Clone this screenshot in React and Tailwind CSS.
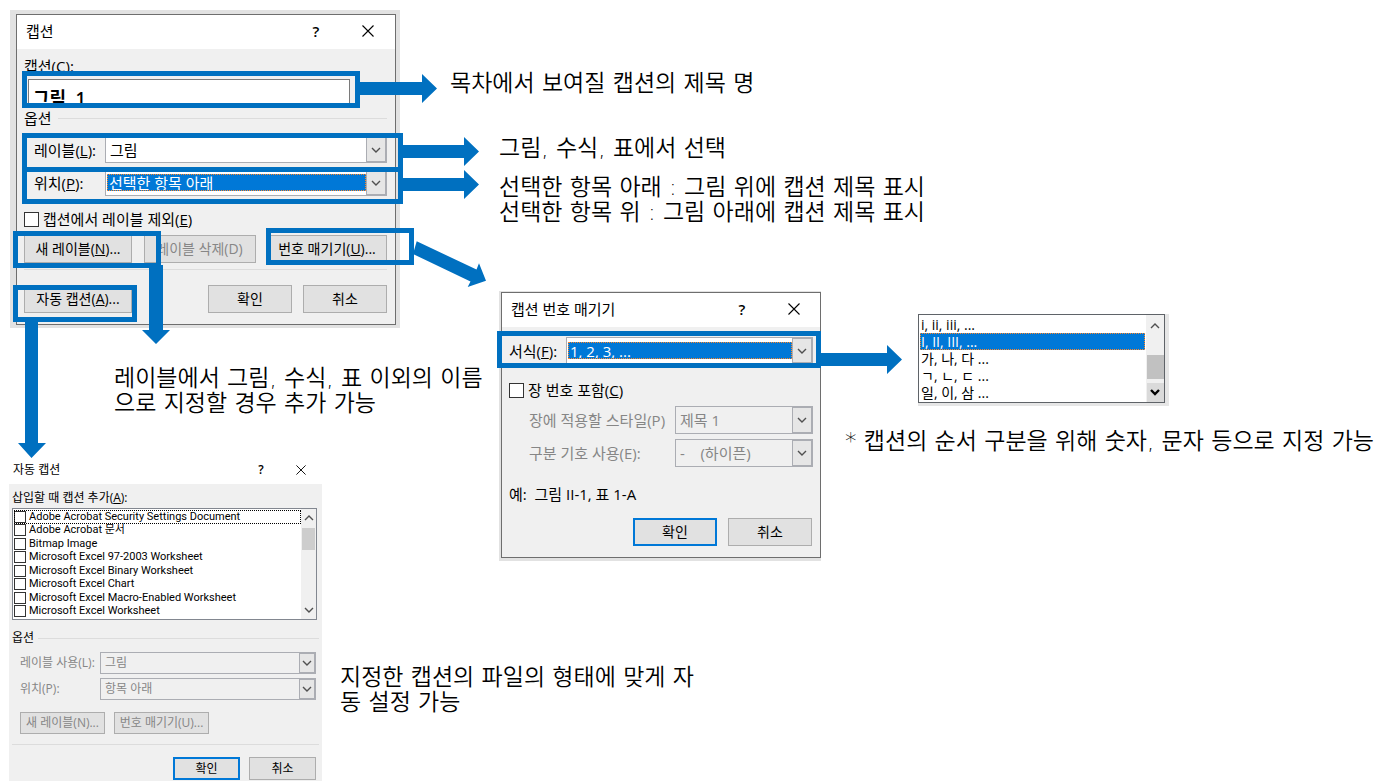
import React from 'react';
import clsx from 'clsx';

const documentTypes = [
  'Adobe Acrobat Security Settings Document',
  'Adobe Acrobat 문서',
  'Bitmap Image',
  'Microsoft Excel 97-2003 Worksheet',
  'Microsoft Excel Binary Worksheet',
  'Microsoft Excel Chart',
  'Microsoft Excel Macro-Enabled Worksheet',
  'Microsoft Excel Worksheet',
];

const numberFormats = ['i, ii, iii, ...', 'I, II, III, ...', '가, 나, 다 ...', 'ㄱ, ㄴ, ㄷ ...', '일, 이, 삼 ...'];

const Chevron = ({ up, className }) => (
  <svg viewBox="0 0 10 6" className={clsx('h-[6px] w-[10px]', className)} fill="none" stroke="currentColor">
    <path d={up ? 'M1 5 L5 1 L9 5' : 'M1 1 L5 5 L9 1'} strokeWidth="1.4" />
  </svg>
);

const TitleBar = ({ title, small, className }) => (
  <header className={clsx('flex items-center bg-white', className)}>
    <h2 className="flex-1">{title}</h2>
    <button type="button" aria-label="도움말" className="w-4 font-semibold">?</button>
    <button type="button" aria-label="닫기" className={clsx('flex w-4 justify-center', small ? 'ml-6' : 'ml-9')}>
      <svg viewBox="0 0 12 12" className={small ? 'h-[10px] w-[10px]' : 'h-3 w-3'} stroke="currentColor" strokeWidth="1.1">
        <path d="M0.5 0.5 L11.5 11.5 M11.5 0.5 L0.5 11.5" />
      </svg>
    </button>
  </header>
);

const Button = ({ primary, className, children, ...props }) => (
  <button
    type="button"
    className={clsx(
      'bg-[#e1e1e1] whitespace-nowrap disabled:text-[#868686]',
      primary ? 'border-2 border-[#0078d7]' : 'border border-[#adadad]',
      className
    )}
    {...props}
  >
    {children}
  </button>
);

const Combo = ({ id, value, focused, disabled, small, className }) => (
  <div
    className={clsx(
      'flex border border-[#abadb3] p-px',
      disabled ? 'bg-[#f0f0f0] text-[#868686]' : 'bg-white',
      className
    )}
  >
    <select
      id={id}
      disabled={disabled}
      defaultValue={value}
      className={clsx(
        'min-w-0 flex-1 appearance-none py-0 disabled:opacity-100',
        focused ? 'my-[3px] border border-dotted border-[#ff8728] bg-[#0078d7] px-px leading-4 text-white' : 'px-[3px]'
      )}
    >
      <option>{value}</option>
    </select>
    <span
      className={clsx(
        '-my-px -mr-px flex items-center justify-center border border-[#abadb3] bg-[#e6e6e6] text-[#505050]',
        small ? 'w-4' : 'w-5'
      )}
    >
      <Chevron />
    </span>
  </div>
);

const CheckBox = ({ id, className }) => (
  <input
    id={id}
    type="checkbox"
    className={clsx('shrink-0 appearance-none border border-[#333] bg-white checked:bg-[#0078d7]', className)}
  />
);

const Note = ({ className, children }) => (
  <p className={clsx('absolute font-["DejaVu_Sans","Noto_Sans_CJK_KR",sans-serif] text-[23px] leading-[25px] font-[350] whitespace-nowrap', className)}>
    {children}
  </p>
);

const CaptionDialog = () => (
  <section className="absolute top-[10px] left-[10px] w-[390px] bg-[#e2e2e2] pt-1 pr-1 pb-[3px] pl-[6px] text-[15px] leading-5">
    <div className="border border-[#6e6e6e] bg-[#f0f0f0]">
      <TitleBar title="캡션" className="h-[34px] pr-[19px] pb-[2px] pl-[9px]" />
      <div className="pt-[7px] pr-2 pb-[11px] pl-[7px]">
        <label htmlFor="caption">캡션(<u>C</u>):</label>
        <div className="ml-1 mt-[3px] h-[27px] w-[322px] overflow-hidden">
          <input
            id="caption"
            defaultValue="그림  1"
            className="h-9 w-full border border-[#7a7a7a] bg-white px-1 text-[18px] font-semibold"
          />
        </div>
        <div className="flex items-center gap-[6px] pt-[2px]">
          <span>옵션</span>
          <hr className="flex-1 border-[#dcdcdc]" />
        </div>
        <div className="mt-2 flex items-center">
          <label htmlFor="label" className="w-[81px] pl-[10px]">레이블(<u>L</u>):</label>
          <Combo id="label" value="그림" className="h-[27px] flex-1" />
        </div>
        <div className="mt-[6px] flex items-center">
          <label htmlFor="position" className="w-[81px] pl-[10px]">위치(<u>P</u>):</label>
          <Combo id="position" value="선택한 항목 아래" focused className="h-[27px] flex-1" />
        </div>
        <div className="mt-[13px] flex items-center gap-1">
          <CheckBox id="exclude" className="h-[15px] w-[15px]" />
          <label htmlFor="exclude">캡션에서 레이블 제외(<u>E</u>)</label>
        </div>
        <div className="mt-[6px] flex justify-between text-[14px]">
          <Button className="h-7 w-[108px]">새 레이블(<u>N</u>)...</Button>
          <Button className="h-7 w-[112px]" disabled>레이블 삭제(D)</Button>
          <Button className="h-7 w-[120px]">번호 매기기(<u>U</u>)...</Button>
        </div>
        <hr className="mt-[6px] border-[#dcdcdc]" />
        <div className="mt-[15px] flex gap-[11px] text-[14px]">
          <Button className="h-7 w-[108px]">자동 캡션(<u>A</u>)...</Button>
          <Button className="ml-auto h-7 w-[84px]">확인</Button>
          <Button className="h-7 w-[84px]">취소</Button>
        </div>
      </div>
    </div>
  </section>
);

const NumberingDialog = () => (
  <section className="absolute top-[291px] left-[499px] w-[322px] bg-[#e2e2e2] pt-px pb-[3px] pl-[2px] text-[15px] leading-5">
    <div className="border border-[#6e6e6e] bg-[#f0f0f0]">
      <TitleBar title="캡션 번호 매기기" className="h-[34px] pr-[18px] pb-[2px] pl-[9px]" />
      <div className="px-[7px] pt-[10px] pb-[11px]">
        <div className="flex items-center">
          <label htmlFor="format" className="w-[57px]">서식(<u>F</u>):</label>
          <Combo id="format" value="1, 2, 3, ..." focused className="h-[27px] flex-1" />
        </div>
        <div className="mt-4 flex items-center gap-1">
          <CheckBox id="chapter" className="h-[15px] w-[15px]" />
          <label htmlFor="chapter">장 번호 포함(<u>C</u>)</label>
        </div>
        <div className="mt-[6px] flex items-center">
          <label htmlFor="style" className="w-[166px] pl-5 whitespace-nowrap text-[#868686]">장에 적용할 스타일(P)</label>
          <Combo id="style" value="제목 1" disabled className="h-7 flex-1" />
        </div>
        <div className="mt-[5px] flex items-center">
          <label htmlFor="separator" className="w-[166px] pl-5 text-[#868686]">구분 기호 사용(E):</label>
          <Combo id="separator" value="-&nbsp;&nbsp;&nbsp; (하이픈)" disabled className="h-7 flex-1" />
        </div>
        <p className="mt-[17px]">예:&nbsp; 그림 II-1, 표 1-A</p>
        <div className="mt-[14px] flex justify-end gap-[11px] pr-px text-[14px]">
          <Button primary className="h-7 w-[84px]">확인</Button>
          <Button className="h-7 w-[84px]">취소</Button>
        </div>
      </div>
    </div>
  </section>
);

const AutoCaptionDialog = () => (
  <section className="absolute top-[455px] left-[9px] w-[313px] bg-[#f0f0f0] text-[12px] leading-4">
    <TitleBar title="자동 캡션" small className="h-[29px] pr-[13px] pl-1" />
    <div className="px-[3px] pt-[6px] pb-1">
      <p>삽입할 때 캡션 추가(<u>A</u>):</p>
      <div className="mt-[2px] flex h-[112px] w-[305px] border border-[#828790] bg-white">
        <ul className='flex flex-1 flex-col py-px pl-px font-["Roboto","Noto_Sans_CJK_KR",sans-serif]'>
          {documentTypes.map((name, i) => (
            <li
              key={name}
              className={clsx('flex flex-1 items-center gap-[3px]', i === 0 && 'outline-1 -outline-offset-1 outline-dotted outline-black')}
            >
              <CheckBox id={`doc-${i}`} className="h-3 w-3" />
              <label htmlFor={`doc-${i}`} className="text-[11px] leading-3">{name}</label>
            </li>
          ))}
        </ul>
        <div className="flex w-[15px] flex-col items-center bg-[#f0f0f0] py-[6px] text-[#505050]">
          <Chevron up className="w-2" />
          <div className="mt-[7px] h-[22px] w-[13px] bg-[#cdcdcd]" />
          <Chevron className="mt-auto w-2" />
        </div>
      </div>
      <div className="mt-[10px] flex items-center gap-1">
        <span>옵션</span>
        <hr className="flex-1 border-[#dcdcdc]" />
      </div>
      <div className="mt-[6px] flex items-center pr-[3px] text-[#868686]">
        <label htmlFor="auto-label" className="w-[88px] pl-2">레이블 사용(L):</label>
        <Combo id="auto-label" value="그림" disabled small className="h-[22px] flex-1" />
      </div>
      <div className="mt-1 flex items-center pr-[3px] text-[#868686]">
        <label htmlFor="auto-position" className="w-[88px] pl-2">위치(P):</label>
        <Combo id="auto-position" value="항목 아래" disabled small className="h-[22px] flex-1" />
      </div>
      <div className="mt-3 flex gap-[9px] pl-2">
        <Button className="h-[22px] w-[85px]" disabled>새 레이블(N)...</Button>
        <Button className="h-[22px] w-[95px]" disabled>번호 매기기(U)...</Button>
      </div>
      <hr className="mt-[10px] border-[#dcdcdc]" />
      <div className="mt-3 flex justify-end gap-[9px] pr-[3px]">
        <Button primary className="h-[23px] w-[67px]">확인</Button>
        <Button className="h-[23px] w-[67px]">취소</Button>
      </div>
    </div>
  </section>
);

const FormatList = () => (
  <section className="absolute top-[314px] left-[918px] w-[251px] bg-[#e6e6e6] pb-[3px] text-[14px]">
    <div className="flex w-[247px] border border-[#5f6368] bg-white">
      <ul className="flex-1 py-px pl-px leading-[17px]">
        {numberFormats.map((format, i) => (
          <li
            key={format}
            className={clsx(
              'h-[17px]',
              i === 1
                ? 'border border-dotted border-[#ff8728] bg-[#0078d7] leading-[15px] text-white'
                : 'px-px'
            )}
          >
            {format}
          </li>
        ))}
      </ul>
      <div className="ml-px flex w-[18px] flex-col items-center bg-[#f0f0f0] pt-2">
        <Chevron up className="text-[#505050]" />
        <div className="mt-auto h-6 w-[17px] bg-[#c1c1c1]" />
        <div className="mt-1 flex h-[19px] w-[17px] items-center justify-center bg-[#dadada]">
          <svg viewBox="0 0 10 7" className="h-[7px] w-[10px]" fill="none" stroke="black" strokeWidth="2.4">
            <path d="M1 1 L5 5 L9 1" />
          </svg>
        </div>
      </div>
    </div>
  </section>
);

// Frames around the controls and the arrows that lead to their notes
const Annotations = () => (
  <svg className="pointer-events-none absolute inset-0 h-full w-full">
    <g fill="none" stroke="#0070c0" strokeWidth="5">
      <rect x="24.5" y="73.5" width="333" height="32" />
      <rect x="24.5" y="135.5" width="376" height="34" />
      <rect x="24.5" y="169.5" width="376" height="32" />
      <rect x="15.5" y="233.5" width="143" height="32" />
      <rect x="268.5" y="230.5" width="143" height="32" />
      <rect x="15.5" y="287.5" width="119" height="32" />
      <rect x="499.5" y="333.5" width="319" height="32" />
    </g>
    <g fill="#0070c0">
      <path d="M359 82 H422 V74 L437 88.5 L422 103 V95 H359 Z" />
      <path d="M402 145 H464 V137 L479 151.5 L464 166 V158 H402 Z" />
      <path d="M402 178 H464 V170 L479 184.5 L464 199 V191 H402 Z" />
      <path d="M416.7 241.3 L476.5 269.5 L479 263.3 L486 280.7 L467.7 287 L470.5 281.5 L413 254 Z" />
      <path d="M149 265 H163 V330 H170 L156 344 L142 330 H149 Z" />
      <path d="M25 321 H38 V443 H46 L31.5 458 L18 443 H25 Z" />
      <path d="M820 353 H887 V345 L902 359.5 L887 374 V366 H820 Z" />
    </g>
  </svg>
);

const App = () => {
  return (
    <main className='relative min-h-screen overflow-hidden bg-white font-["Open_Sans","Noto_Sans_CJK_KR",sans-serif] text-black'>
      <CaptionDialog />
      <NumberingDialog />
      <AutoCaptionDialog />
      <FormatList />
      <Annotations />

      <Note className="top-[71px] left-[450px]">목차에서 보여질 캡션의 제목 명</Note>
      <Note className="top-[136px] left-[499px]">그림, 수식, 표에서 선택</Note>
      <Note className="top-[175px] left-[499px]">
        선택한 항목 아래 : 그림 위에 캡션 제목 표시
        <br />
        선택한 항목 위 : 그림 아래에 캡션 제목 표시
      </Note>
      <Note className="top-[366px] left-[114px]">
        레이블에서 그림, 수식, 표 이외의 이름
        <br />
        으로 지정할 경우 추가 가능
      </Note>
      <Note className="top-[429px] left-[845px]">* 캡션의 순서 구분을 위해 숫자, 문자 등으로 지정 가능</Note>
      <Note className="top-[665px] left-[340px]">
        지정한 캡션의 파일의 형태에 맞게 자
        <br />
        동 설정 가능
      </Note>
    </main>
  );
};

export default App;
